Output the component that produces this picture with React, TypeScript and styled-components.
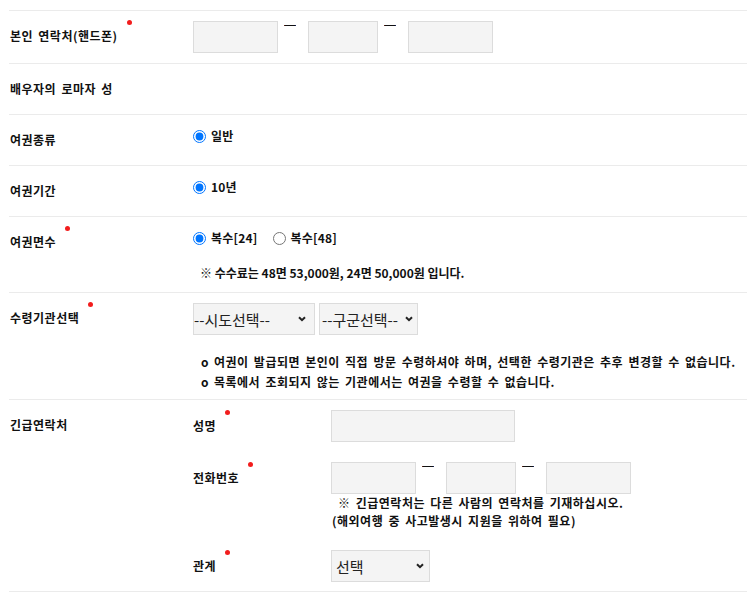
import React from 'react'
import styled, { createGlobalStyle } from 'styled-components'

const GlobalStyle = createGlobalStyle`
  html, body {
    margin: 0;
    padding: 0;
    background: #fff;
  }
  body {
    font-family: "Noto Sans CJK KR", "Noto Sans", sans-serif;
    font-size: 12px;
    color: #111;
  }
`

const Chevron: React.FC = () => (
  <svg width='8' height='6' viewBox='0 0 8 6' aria-hidden='true'>
    <path d='M1 1.2 L4 4.2 L7 1.2' fill='none' stroke='#222' strokeWidth='2' />
  </svg>
)

export default function App() {
  return (
    <>
      <GlobalStyle />
      <Form>
        <Row>
          <Label>
            <Req>본인 연락처(핸드폰)</Req>
          </Label>
          <Field $pad='10px 0'>
            <InputLine>
              <TextInput $w={85} />
              <Dash>—</Dash>
              <TextInput $w={70} />
              <Dash>—</Dash>
              <TextInput $w={85} />
            </InputLine>
          </Field>
        </Row>

        <Row>
          <Label>배우자의 로마자 성</Label>
          <Field $pad='0' />
        </Row>

        <Row>
          <Label>여권종류</Label>
          <Field $pad='12px 0 0'>
            <RadioLine>
              <RadioItem>
                <Radio type='radio' name='kind' defaultChecked />
                일반
              </RadioItem>
            </RadioLine>
          </Field>
        </Row>

        <Row>
          <Label>여권기간</Label>
          <Field $pad='12px 0 0'>
            <RadioLine>
              <RadioItem>
                <Radio type='radio' name='period' defaultChecked />
                10년
              </RadioItem>
            </RadioLine>
          </Field>
        </Row>

        <Row>
          <Label>
            <Req>여권면수</Req>
          </Label>
          <Field $pad='12px 0 10px'>
            <RadioLine>
              <RadioItem>
                <Radio type='radio' name='pages' defaultChecked />
                복수[24]
              </RadioItem>
              <RadioItem>
                <Radio type='radio' name='pages' />
                복수[48]
              </RadioItem>
            </RadioLine>
            <FeeNote>※ 수수료는 48면 53,000원, 24면 50,000원 입니다.</FeeNote>
          </Field>
        </Row>

        <Row>
          <Label>
            <Req>수령기관선택</Req>
          </Label>
          <Field $pad='10px 0 7px'>
            <SelectLine>
              <SelectBox $w={122}>
                <NativeSelect $padLeft={0}>
                  <option>--시도선택--</option>
                </NativeSelect>
                <ArrowSlot $right={8}>
                  <Chevron />
                </ArrowSlot>
              </SelectBox>
              <SelectBox $w={99}>
                <NativeSelect $padLeft={2}>
                  <option>--구군선택--</option>
                </NativeSelect>
                <ArrowSlot $right={4}>
                  <Chevron />
                </ArrowSlot>
              </SelectBox>
            </SelectLine>
            <NoticeList>
              <NoticeItem>
                <Bullet>o</Bullet>
                여권이 발급되면 본인이 직접 방문 수령하셔야 하며, 선택한 수령기관은 추후 변경할 수 없습니다.
              </NoticeItem>
              <NoticeItem>
                <Bullet>o</Bullet>
                목록에서 조회되지 않는 기관에서는 여권을 수령할 수 없습니다.
              </NoticeItem>
            </NoticeList>
          </Field>
        </Row>

        <Row>
          <Label>긴급연락처</Label>
          <Field $pad='10px 0 9px'>
            <SubRows>
              <SubRow>
                <SubLabel>
                  <Req>성명</Req>
                </SubLabel>
                <SubField>
                  <TextInput $w={184} />
                </SubField>
              </SubRow>
              <SubRow>
                <SubLabel>
                  <Req>전화번호</Req>
                </SubLabel>
                <SubField>
                  <InputLine>
                    <TextInput $w={85} />
                    <Dash>—</Dash>
                    <TextInput $w={70} />
                    <Dash>—</Dash>
                    <TextInput $w={85} />
                  </InputLine>
                  <HelpText $indent={7}>※ 긴급연락처는 다른 사람의 연락처를 기재하십시오.</HelpText>
                  <HelpText $indent={1}>(해외여행 중 사고발생시 지원을 위하여 필요)</HelpText>
                </SubField>
              </SubRow>
              <SubRow>
                <SubLabel>
                  <Req>관계</Req>
                </SubLabel>
                <SubField>
                  <SelectBox $w={99}>
                    <NativeSelect $padLeft={4}>
                      <option>선택</option>
                    </NativeSelect>
                    <ArrowSlot $right={5}>
                      <Chevron />
                    </ArrowSlot>
                  </SelectBox>
                </SubField>
              </SubRow>
            </SubRows>
          </Field>
        </Row>
      </Form>
    </>
  )
}

const Form = styled.div`
  padding: 10px 0 0 9px;
  letter-spacing: 0.5px;
  word-spacing: 2px;
`

const Row = styled.div`
  display: grid;
  grid-template-columns: 184px 1fr;
  border-top: 1px solid #ebebeb;
  &:last-child {
    border-bottom: 1px solid #ebebeb;
  }
`

const Label = styled.div`
  padding: 16px 0 16px 1px;
  line-height: 18px;
  font-weight: bold;
`

const Req = styled.span`
  position: relative;
  &::after {
    content: '';
    position: absolute;
    right: -14px;
    top: -7px;
    width: 5px;
    height: 5px;
    border-radius: 50%;
    background: #f21d1d;
  }
`

const Field = styled.div<{ $pad: string }>`
  padding: ${p => p.$pad};
  display: flex;
  flex-direction: column;
  align-items: flex-start;
`

const InputLine = styled.div`
  display: flex;
  align-items: flex-start;
`

const TextInput = styled.input.attrs({ type: 'text' })<{ $w: number }>`
  box-sizing: border-box;
  width: ${p => p.$w}px;
  height: 32px;
  margin: 0;
  padding: 0 6px;
  border: 1px solid #dcdcdc;
  background: #f4f4f4;
  font: 13px "Noto Sans CJK KR", sans-serif;
  outline: none;
`

const Dash = styled.span`
  width: 12px;
  margin: -2px 12px 0 6px;
  font: 12px/12px "Liberation Sans", sans-serif;
  letter-spacing: 0;
  color: #111;
  overflow: hidden;
`

const RadioLine = styled.div`
  display: flex;
  align-items: center;
  gap: 15px;
  height: 18px;
`

const RadioItem = styled.label`
  display: flex;
  align-items: center;
  gap: 5px;
  font-weight: bold;
  line-height: 18px;
  letter-spacing: 0.2px;
`

const Radio = styled.input`
  width: 13px;
  height: 13px;
  margin: 0;
  accent-color: #0075ff;
`

const FeeNote = styled.p`
  margin: 17px 0 0;
  padding-left: 7px;
  line-height: 18px;
  font-weight: bold;
  letter-spacing: 0;
  word-spacing: 0;
`

const SelectLine = styled.div`
  display: flex;
  gap: 4px;
`

const SelectBox = styled.div<{ $w: number }>`
  box-sizing: border-box;
  display: flex;
  align-items: center;
  width: ${p => p.$w}px;
  height: 32px;
  border: 1px solid #dcdcdc;
  background: #f4f4f4;
`

const NativeSelect = styled.select<{ $padLeft: number }>`
  flex: 1;
  min-width: 0;
  height: 100%;
  margin: 0;
  padding: 0 0 0 ${p => p.$padLeft}px;
  border: 0;
  background: transparent;
  appearance: none;
  font: 15px "Noto Sans CJK KR", sans-serif;
  letter-spacing: 0;
  color: #222;
  outline: none;
`

const ArrowSlot = styled.span<{ $right: number }>`
  display: flex;
  margin-right: ${p => p.$right}px;
  pointer-events: none;
`

const NoticeList = styled.ul`
  list-style: none;
  margin: 17px 0 0;
  padding: 0 0 0 8px;
`

const NoticeItem = styled.li`
  display: flex;
  line-height: 20px;
  font-weight: bold;
  white-space: nowrap;
`

const Bullet = styled.span`
  width: 13px;
  flex: none;
`

const SubRows = styled.div`
  display: flex;
  flex-direction: column;
  gap: 20px;
`

const SubRow = styled.div`
  display: flex;
  align-items: flex-start;
`

const SubLabel = styled.div`
  width: 138px;
  line-height: 32px;
  font-weight: bold;
`

const SubField = styled.div`
  display: flex;
  flex-direction: column;
  align-items: flex-start;
`

const HelpText = styled.p<{ $indent: number }>`
  margin: 0;
  padding-left: ${p => p.$indent}px;
  line-height: 18px;
  font-weight: bold;
`
